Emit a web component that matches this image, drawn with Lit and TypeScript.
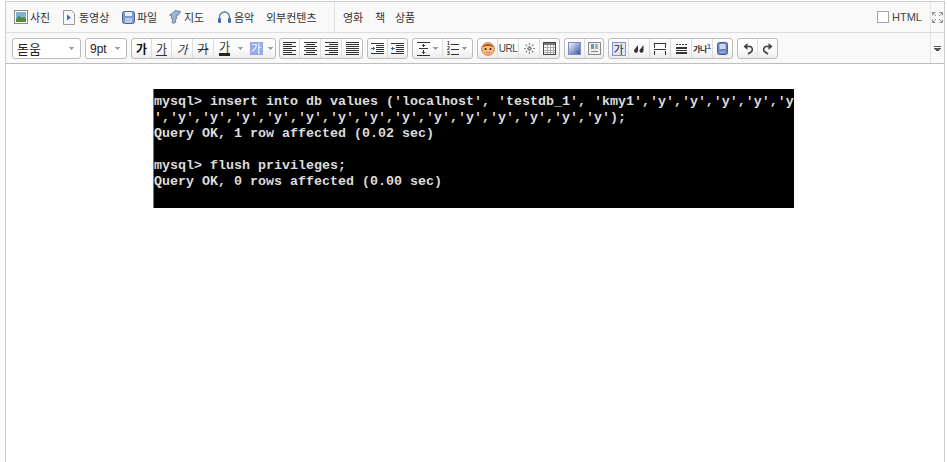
import { LitElement, html, css, svg } from "lit";
import { customElement } from "lit/decorators.js";

const ic = (w: number, h: number, body: unknown) =>
  html`<svg width=${w} height=${h} viewBox="0 0 ${w} ${h}" shape-rendering="crispEdges">${body}</svg>`;
const aa = (w: number, h: number, body: unknown) =>
  html`<svg width=${w} height=${h} viewBox="0 0 ${w} ${h}">${body}</svg>`;

const lines = (rows: [number, number, number][], color = "#333") =>
  rows.map(([x, y, w]) => svg`<rect x=${x} y=${y} width=${w} height="1" fill=${color}/>`);

const photo = ic(14, 14, svg`<rect x=".5" y=".5" width="13" height="13" fill="#fff" stroke="#8a8a8a"/><rect x="2" y="2" width="10" height="10" fill="#7fb0cf"/><path d="M2 9l3-3 3 2 2-1 2 2v3H2z" fill="#4c8a3c" shape-rendering="auto"/>`);
const video = aa(14, 15, svg`<path d="M1.5.5h8l3 3v11h-11z" fill="#f7f7f7" stroke="#999"/><path d="M5 4.5l4 3-4 3z" fill="#3f6fae"/>`);
const file = aa(13, 13, svg`<rect x=".5" y=".5" width="12" height="12" rx="2" fill="#7f9bc9" stroke="#47659a"/><rect x="3" y="1" width="7" height="4" fill="#e8eef8"/><rect x="3" y="7" width="7" height="5" fill="#b9c9e4"/>`);
const map = aa(13, 14, svg`<path d="M6 .5l5.500 1-1.500 3-3 1.500 1 2.500-2 1 1 2.500-3 1.500-1-2 1-2-2-1.500 1-2-2.500-1 3-2z" fill="#9fb4cd" stroke="#54739a" stroke-width=".8"/>`);
const music = aa(15, 14, svg`<path d="M2.500 9V7a5 5 0 0 1 10 0v2" fill="none" stroke="#62779f" stroke-width="1.300"/><rect x="1" y="8" width="3" height="5" rx="1" fill="#4a6aa8"/><rect x="11" y="8" width="3" height="5" rx="1" fill="#4a6aa8"/>`);
const expand = aa(11, 11, svg`<path d="M.5 3.500v-3h3M1 1l3 3M10.500 3.500v-3h-3M10 1L7 4M.5 7.500v3h3M1 10l3-3M10.500 7.500v3h-3M10 10L7 7" fill="none" stroke="#8d8d8d"/>`);
const caret = ic(5, 3, svg`<path d="M0 0h5v1H4v1H3v1H2V2H1V1H0z" fill="#a0a0a0"/>`);
const align = (k: "l" | "c" | "r" | "j") => {
  const ys = [0, 2, 4, 6, 8, 10, 12];
  const ws = k === "j" ? [13, 13, 13, 13, 13, 13, 13] : [13, 9, 13, 9, 13, 9, 13];
  return ic(13, 13, lines(ys.map((y, i) => {
    const w = ws[i];
    const x = k === "l" || k === "j" ? 0 : k === "c" ? (13 - w) / 2 | 0 : 13 - w;
    return [x, y, w] as [number, number, number];
  })));
};
const indent = (out: boolean) => ic(13, 11, svg`${lines([[0, 0, 13], [5, 2, 8], [5, 4, 8], [5, 6, 8], [5, 8, 8], [0, 10, 13]])}
  <path d=${out ? "M0 5h4v1H0zM1 4h1v3H1z" : "M0 5h4v1H0zM2 4h1v3H2z"} fill="#2f5fa8"/>`);
const lineHeight = ic(13, 14, svg`<path d="M0 0h13v1H0zM0 13h13v1H0zM2 6h9v1H2z" fill="#333"/><path d="M6 2h1v3H6zM5 3h3v1H5zM6 8h1v4H6zM5 10h3v1H5z" fill="#333"/>`);
const list = html`<span class="li"><span class="nums">1<br />2<br />3</span>${ic(9, 12, lines([[1, 1, 8], [1, 6, 8], [1, 11, 8]]))}</span>`;
const smile = aa(14, 14, svg`<circle cx="7" cy="7" r="6.300" fill="#fbbf86" stroke="#d9772a"/><path d="M1.500 5a6 5 0 0 1 11 0c-3-1.500-8-1.500-11 0z" fill="#a4561c"/><circle cx="4.500" cy="7" r="1" fill="#222"/><circle cx="9.500" cy="7" r="1" fill="#222"/><path d="M4.500 10q2.500 2 5 0" fill="#fff" stroke="#c4371e" stroke-width=".8"/>`);
const star = aa(13, 13, svg`<path d="M6.500 1v11M1 6.500h11M2.500 2.500l8 8M10.500 2.500l-8 8" stroke="#888" stroke-width="1.200" stroke-dasharray="2 1"/>`);
const table = ic(13, 13, svg`<rect x=".5" y=".5" width="12" height="12" fill="#fff" stroke="#444"/><rect x="1" y="1" width="11" height="2" fill="#777"/><path d="M4 3v9M7 3v9M10 3v9M1 5.500h11M1 8h11M1 10.500h11" stroke="#aaa" fill="none"/>`);
const grad = aa(13, 13, svg`<defs><linearGradient id="g" x1="0" y1="0" x2="1" y2="1"><stop offset="0" stop-color="#fff"/><stop offset="1" stop-color="#2f4da0"/></linearGradient></defs><rect x=".5" y=".5" width="12" height="12" fill="url(#g)" stroke="#7d8cc0"/>`);
const box = ic(13, 13, svg`<rect x=".5" y=".5" width="12" height="12" fill="#eee" stroke="#888"/><rect x="3" y="2" width="3" height="5" fill="#6f8fc0"/><rect x="7" y="2" width="3" height="5" fill="#aab"/><rect x="3" y="9" width="7" height="1" fill="#888"/>`);
const quote = aa(10, 8, svg`<path d="M4 0L.5 4.500a2 2 0 1 0 3.500 1zM9.500 0L6 4.500a2 2 0 1 0 3.500 1z" fill="#333"/>`);
const hr = ic(12, 12, svg`<path d="M.5 5V.5h11V5M.5 7.500V11.500M11.500 7.500V11.500" fill="none" stroke="#333"/><path d="M0 6h12v1H0z" fill="#333"/>`);
const hr2 = ic(11, 10, svg`<path d="M0 0h2v1H0zM3 0h2v1H3zM6 0h2v1H6zM9 0h2v1H9zM0 3h11v2H0zM0 6h11v1H0zM0 8h11v2H0z" fill="#333"/>`);
const book = aa(11, 13, svg`<rect x=".5" y=".5" width="10" height="12" rx="2" fill="#6b84c0" stroke="#46609e"/><rect x="2.500" y="2" width="6" height="5" fill="#cfd9ee"/><rect x="2.500" y="9" width="6" height="2" fill="#8fa4d4"/>`);
const undo = (flip: boolean) => html`<span class=${flip ? "flip" : ""}>${aa(10, 13, svg`<path d="M2.500 4.500H6a3 3 0 0 1 2 5.500L5 12" fill="none" stroke="#444" stroke-width="1.700"/><path d="M4.500 1L.5 4.500 4.500 8z" fill="#444"/>`)}</span>`;
const menuDown = ic(7, 5, svg`<path d="M0 0h7v1H0zM0 2h7v1H6v1H5v1H2V4H1V3H0z" fill="#555"/>`);

@customElement("app-root")
export class AppRoot extends LitElement {
  static styles = css`
    :host { display: block; width: 947px; height: 462px; overflow: hidden; background: #fff;
      font-family: "Noto Sans CJK KR", "Liberation Sans", sans-serif; color: #333; }
    .frame { box-sizing: border-box; width: 940px; height: 461px; margin: 1px 0 0 5px;
      border: 1px solid #ccc; border-bottom: none; }
    .row { display: flex; height: 30px; background: #f9f9f9; }
    .r1 { border-bottom: 1px solid #dcdcdc; }
    .r2 { border-bottom: 1px solid #bdbdbd; }
    .main { flex: 1; display: flex; min-width: 0; }
    .side { width: 13px; border-left: 1px solid #e4e4e4; display: flex; align-items: center; justify-content: center; }
    .menu { align-items: center; padding-left: 8px; font-size: 11px; line-height: 14px; }
    .mi { display: flex; align-items: center; gap: 2px; white-space: nowrap; height: 16px; flex: none; }
    .mi span { display: block; width: 20px; }
    .mi.m1 { margin-right: 12px; }
    .mi.m2 { margin-right: 13px; gap: 3px; }
    .mi.m2 span { width: 30px; }
    .mi.m3 { margin-right: 12px; }
    .mi.m4 { margin-right: 13px; }
    .mi.m5 { margin-right: 12px; }
    .mi.ext { width: 51px; }
    .vsep { width: 1px; height: 30px; background: #e0e0e0; margin: 0 8px 0 17px; }
    .plain { flex: none; width: 20px; margin-right: 12px; white-space: nowrap; }
    .plain.p2 { width: 10px; margin-right: 10px; }
    .spacer { flex: 1; }
    .html { display: flex; align-items: center; gap: 3px; margin-right: 8px; font: 11px "Liberation Sans", sans-serif; color: #444; }
    .check { box-sizing: border-box; width: 12px; height: 12px; background: #fff; border: 1px solid #a5a5a5; }
    .tools { padding: 5px 0 0 6px; gap: 4px; align-items: flex-start; }
    .sel, .grp { box-sizing: border-box; height: 21px; border: 1px solid #bcbcbc; border-radius: 3px; display: flex; flex: none; }
    .sel { background: #fff; align-items: center; justify-content: space-between; padding: 0 6px 0 4px; }
    .sel.font { width: 69px; font-size: 13px; color: #222; }
    .sel.size { width: 42px; font: 12px "Liberation Sans", sans-serif; color: #222; }
    .grp { background: linear-gradient(#fff 0, #fbfbfb 55%, #ececec 100%); }
    .g1 { margin-right: -1px; }
    .b { box-sizing: border-box; width: 21px; height: 19px; border-right: 1px solid #ddd; display: flex; align-items: center; justify-content: center; font-size: 12px; line-height: 12px; color: #333; }
    .b:first-child { width: 20px; }
    .b:last-child { width: 19px; border-right: none; }
    .g4 .b:last-child { width: 20px; }
    .g2 .b:last-child { width: 18px; }
    .b.n { border-right: none; }
    .b.w20 { width: 20px; }
    .b.a { width: 11px; border-right: none; padding-right: 1px; }
    .b.a:last-child { width: 9px; }
    .b.w30 { width: 30px; gap: 3px; justify-content: flex-start; padding-left: 4px; }
    .b.w29 { width: 29px; gap: 3px; justify-content: flex-start; padding-left: 4px; }
    .bold { font-weight: 700; color: #111; }
    .under { text-decoration: underline; }
    .ital { font-style: italic; }
    .strike { text-decoration: line-through; }
    .color { border-bottom: 3px solid #222; line-height: 10px; height: 11px; display: block; }
    .bg { width: 13px; height: 13px; line-height: 13px; text-align: center; background: #9aa8ec; color: #fff; display: block; font-size: 11px; }
    .on { box-sizing: border-box; width: 14px; height: 14px; line-height: 12px; text-align: center; background: #dfe6fa; border: 1px solid #7f93d0; color: #223; display: block; font-size: 11px; }
    .url { font: 10px "Liberation Sans", sans-serif; letter-spacing: -.5px; color: #444; }
    .ga { font-size: 8px; letter-spacing: -.6px; white-space: nowrap; font-weight: 700; }
    .ga sup { font: 700 8px "Liberation Sans", sans-serif; color: #4a63b0; vertical-align: 3px; line-height: 0; }
    .li { display: flex; align-items: center; gap: 0; }
    .nums { font: 700 5px/5px "Liberation Sans", sans-serif; color: #222; }
    .flip { display: block; transform: scaleX(-1); height: 13px; }
    .body { padding: 25px 0 0 147px; }
    .shot { box-sizing: border-box; width: 641px; height: 119px; background: #000; color: #ddd; margin: 0;
      padding: 5px 0 0 0; font: 700 13.34px/16px "Liberation Mono", monospace; white-space: pre; overflow: hidden; border-left: 1px solid #777; }
  `;

  render() {
    const g = (cls: string, c: unknown) => html`<span class="b ${cls}">${c}</span>`;
    return html`<div class="frame">
      <div class="row r1">
        <div class="main menu">
          <span class="mi m1">${photo}<span>사진</span></span>
          <span class="mi m2">${video}<span>동영상</span></span>
          <span class="mi m3">${file}<span>파일</span></span>
          <span class="mi m4">${map}<span>지도</span></span>
          <span class="mi m5">${music}<span>음악</span></span>
          <span class="mi ext">외부컨텐츠</span>
          <span class="vsep"></span>
          <span class="plain">영화</span>
          <span class="plain p2">책</span>
          <span class="plain">상품</span>
          <span class="spacer"></span>
          <span class="html"><span class="check"></span>HTML</span>
        </div>
        <div class="side">${expand}</div>
      </div>
      <div class="row r2">
        <div class="main tools">
          <div class="sel font"><span>돋움</span>${caret}</div>
          <div class="sel size"><span>9pt</span>${caret}</div>
          <div class="grp g1">
            ${g("", html`<span class="bold">가</span>`)}
            ${g("w20", html`<span class="under">가</span>`)}
            ${g("", html`<span class="ital">가</span>`)}
            ${g("", html`<span class="strike">가</span>`)}
            ${g("n", html`<span class="color">가</span>`)}
            ${g("a", caret)}
            ${g("n w20", html`<span class="bg">가</span>`)}
            ${g("a", caret)}
          </div>
          <div class="grp g4">${g("", align("l"))}${g("", align("c"))}${g("", align("r"))}${g("", align("j"))}</div>
          <div class="grp">${g("", indent(false))}${g("", indent(true))}</div>
          <div class="grp">
            <span class="b w30">${lineHeight}${caret}</span>
            <span class="b w29">${list}${caret}</span>
          </div>
          <div class="grp">${g("", smile)}${g("", html`<span class="url">URL</span>`)}${g("", star)}${g("", table)}</div>
          <div class="grp g2">${g("", grad)}${g("", box)}</div>
          <div class="grp">
            ${g("", html`<span class="on">가</span>`)}
            ${g("", quote)}
            ${g("", hr)}
            ${g("", hr2)}
            ${g("", html`<span class="ga">가나<sup>1</sup></span>`)}
            ${g("", book)}
          </div>
          <div class="grp">${g("", undo(false))}${g("", undo(true))}</div>
        </div>
        <div class="side">${menuDown}</div>
      </div>
      <div class="body"><pre class="shot">mysql&gt; insert into db values ('localhost', 'testdb_1', 'kmy1','y','y','y','y','y
','y','y','y','y','y','y','y','y','y','y','y','y','y','y');
Query OK, 1 row affected (0.02 sec)

mysql&gt; flush privileges;
Query OK, 0 rows affected (0.00 sec)</pre></div>
    </div>`;
  }
}
